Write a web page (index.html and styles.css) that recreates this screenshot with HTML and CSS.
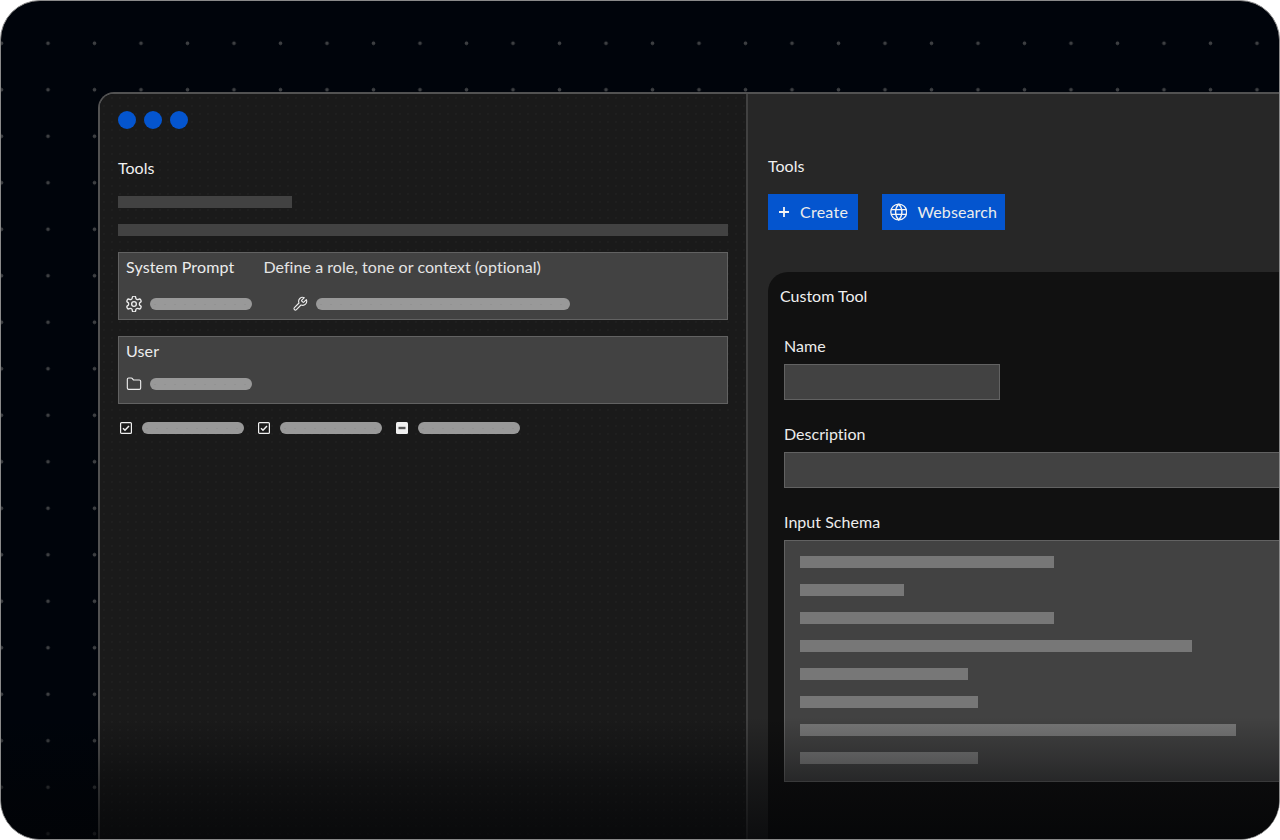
FILE: index.html
```html
<!DOCTYPE html>
<html lang="en">
<head>
<meta charset="utf-8">
<title>Tools</title>
<link rel="stylesheet" href="styles.css">
</head>
<body>
<div class="frame">
  <div class="window">
    <section class="pane-left">
      <div class="lights"><span class="light"></span><span class="light"></span><span class="light"></span></div>
      <h2 class="title-left">Tools</h2>
      <div class="bar bar-short"></div>
      <div class="bar bar-full"></div>
      <div class="box box-system">
        <div class="box-head"><span class="box-name">System Prompt</span><span class="box-hint">Define a role, tone or context (optional)</span></div>
        <div class="box-row">
          <span class="item">
            <svg class="icon" viewBox="2.4 1.8 19.2 20.4"><path d="M12.22 2h-.44a2 2 0 0 0-2 2v.18a2 2 0 0 1-1 1.73l-.43.25a2 2 0 0 1-2 0l-.15-.08a2 2 0 0 0-2.73.73l-.22.38a2 2 0 0 0 .73 2.73l.15.1a2 2 0 0 1 1 1.72v.51a2 2 0 0 1-1 1.74l-.15.09a2 2 0 0 0-.73 2.73l.22.38a2 2 0 0 0 2.73.73l.15-.08a2 2 0 0 1 2 0l.43.25a2 2 0 0 1 1 1.73V20a2 2 0 0 0 2 2h.44a2 2 0 0 0 2-2v-.18a2 2 0 0 1 1-1.73l.43-.25a2 2 0 0 1 2 0l.15.08a2 2 0 0 0 2.73-.73l.22-.39a2 2 0 0 0-.73-2.73l-.15-.08a2 2 0 0 1-1-1.74v-.5a2 2 0 0 1 1-1.74l.15-.09a2 2 0 0 0 .73-2.73l-.22-.38a2 2 0 0 0-2.73-.73l-.15.08a2 2 0 0 1-2 0l-.43-.25a2 2 0 0 1-1-1.73V4a2 2 0 0 0-2-2z"/><circle cx="12" cy="12" r="3"/></svg>
            <span class="pill"></span>
          </span>
          <span class="item item-tool">
            <svg class="icon" viewBox="0 0 24 24"><path d="M14.7 6.3a1 1 0 0 0 0 1.4l1.6 1.6a1 1 0 0 0 1.4 0l3.77-3.77a6 6 0 0 1-7.94 7.94l-6.91 6.91a2.12 2.12 0 0 1-3-3l6.91-6.91a6 6 0 0 1 7.94-7.94l-3.76 3.76z"/></svg>
            <span class="pill pill-long"></span>
          </span>
        </div>
      </div>
      <div class="box box-user">
        <div class="box-head"><span class="box-name">User</span></div>
        <div class="box-row box-row-user">
          <span class="item">
            <svg class="icon" viewBox="0 0 24 24"><path d="M20 20a2 2 0 0 0 2-2V8a2 2 0 0 0-2-2h-7.9a2 2 0 0 1-1.69-.9L9.6 3.9A2 2 0 0 0 7.93 3H4a2 2 0 0 0-2 2v13a2 2 0 0 0 2 2Z"/></svg>
            <span class="pill"></span>
          </span>
        </div>
      </div>
      <div class="checks">
        <span class="check"><svg class="check-icon" viewBox="0 0 12 12"><rect x=".6" y=".6" width="10.8" height="10.8" rx="1"/><path class="tick" d="M3 6.2l2 2L9 4"/></svg><span class="pill"></span></span>
        <span class="check"><svg class="check-icon" viewBox="0 0 12 12"><rect x=".6" y=".6" width="10.8" height="10.8" rx="1"/><path class="tick" d="M3 6.2l2 2L9 4"/></svg><span class="pill"></span></span>
        <span class="check"><svg class="check-icon" viewBox="0 0 12 12"><rect class="solid" x="0" y="0" width="12" height="12" rx="1.5"/><path class="dash" d="M2.5 6h7"/></svg><span class="pill"></span></span>
      </div>
    </section>
    <section class="pane-right">
      <h2 class="title-right">Tools</h2>
      <div class="actions">
        <button class="btn btn-create"><svg class="btn-plus" viewBox="0 0 12 12"><path d="M6 1v10M1 6h10"/></svg>Create</button>
        <button class="btn btn-search"><svg class="btn-globe" viewBox="1 1 22 22"><circle cx="12" cy="12" r="10"/><path d="M12 2a14.5 14.5 0 0 0 0 20 14.5 14.5 0 0 0 0-20"/><path d="M2.6 9h18.8M2.6 15h18.8"/></svg>Websearch</button>
      </div>
      <div class="card">
        <h3 class="card-title">Custom Tool</h3>
        <label class="label">Name</label>
        <div class="field field-name"></div>
        <label class="label">Description</label>
        <div class="field"></div>
        <label class="label">Input Schema</label>
        <div class="schema">
          <div class="line" style="width:254px"></div>
          <div class="line" style="width:104px"></div>
          <div class="line" style="width:254px"></div>
          <div class="line" style="width:392px"></div>
          <div class="line" style="width:168px"></div>
          <div class="line" style="width:178px"></div>
          <div class="line" style="width:436px"></div>
          <div class="line" style="width:178px"></div>
        </div>
      </div>
    </section>
  </div>
  <div class="fade"></div>
</div>
</body>
</html>
```
FILE: styles.css
```css
* { box-sizing: border-box; }
html, body { margin: 0; background: #fff; }
body { width: 1280px; height: 840px; overflow: hidden; font-family: "Lato", "Liberation Sans", sans-serif; color: #f0f0f0; }
h2, h3 { margin: 0; font-weight: 400; font-size: 16px; line-height: 20px; }

.frame {
  position: relative;
  width: 1280px;
  height: 840px;
  padding: 91px 0 0 97px;
  overflow: hidden;
  border: 1px solid #8a8a8a;
  border-radius: 40px;
  background-color: #00040b;
  background-image: radial-gradient(circle, #3d3f42 0, #3d3f42 1.6px, transparent 2.2px);
  background-size: 46.5px 46.5px;
  background-position: -22.75px 19px;
}
.fade {
  position: absolute;
  left: 0; right: 0; bottom: 0;
  height: 122px;
  background: linear-gradient(to bottom, rgba(2,3,5,0) 0, rgba(2,3,5,.25) 33%, rgba(2,3,5,.42) 52%, rgba(2,3,5,.72) 100%);
  pointer-events: none;
}

.window {
  display: flex;
  width: 1240px;
  height: 760px;
  border: solid #525252;
  border-width: 2px 0 0 2px;
  border-top-left-radius: 16px;
  overflow: hidden;
}
.pane-left {
  flex: 0 0 648px;
  padding: 17px 18px 0;
  background-color: #1a1a1a;
  background-image: radial-gradient(circle, #222 0, #222 .5px, transparent 1px);
  background-size: 8px 8px;
  border-right: 2px solid #414141;
}
.pane-right {
  flex: 1;
  padding: 62px 0 0 20px;
  background: #272727;
}

.lights { display: flex; gap: 8px; }
.light { width: 18px; height: 18px; border-radius: 50%; background: #0455cf; }
.title-left { margin-top: 29px; }
.bar { height: 12px; background: #424242; }
.bar-short { width: 174px; margin-top: 18px; }
.bar-full { width: 610px; margin-top: 16px; }

.box { width: 610px; height: 68px; background: #424242; border: 1px solid #626262; padding: 4px 7px 0; }
.box-system { margin-top: 16px; }
.box-user { margin-top: 16px; }
.box-head { display: flex; gap: 29px; line-height: 20px; font-size: 16px; }
.box-name { color: #ececec; letter-spacing: .15px; }
.box-hint { color: #e4e4e4; letter-spacing: .05px; }
.box-row { display: flex; margin-top: 19px; }
.box-row-user { margin-top: 15px; }
.item { display: flex; align-items: center; gap: 8px; }
.item-tool { margin-left: 40px; }
.icon { width: 16px; height: 16px; fill: none; stroke: #ececec; stroke-width: 1.7; stroke-linecap: round; stroke-linejoin: round; }
.pill {
  display: block;
  width: 102px;
  height: 12px;
  border-radius: 6px;
  background-color: #999;
  background-image: radial-gradient(circle, #909090 0, #909090 .4px, transparent .9px);
  background-size: 10px 7px;
  background-position: 0 3px;
}
.pill-long { width: 254px; }

.checks { display: flex; gap: 14px; margin: 18px 0 0 2px; }
.check { display: flex; align-items: center; gap: 10px; }
.check-icon { width: 12px; height: 12px; fill: none; stroke: #f0f0f0; stroke-width: 1.2; }
.check-icon .tick { stroke-width: 1.5; }
.check-icon .solid { fill: #f0f0f0; stroke: none; }
.check-icon .dash { stroke: #555; stroke-width: 2.4; }

.title-right { margin-top: 0; }
.actions { display: flex; gap: 24px; margin-top: 18px; }
.btn { display: flex; align-items: center; height: 36px; border: 0; padding: 0 8px; background: #0455cf; color: #ececec; font: 400 16px/20px "Lato", "Liberation Sans", sans-serif; letter-spacing: .25px; }
.btn-create { width: 90px; padding-left: 10px; gap: 10px; }
.btn-search { width: 123px; gap: 10px; letter-spacing: .12px; }
.btn-plus { width: 12px; height: 12px; fill: none; stroke: #f4f4f4; stroke-width: 1.8; }
.btn-globe { width: 18px; height: 18px; fill: none; stroke: #f4f4f4; stroke-width: 1.7; }

.card { margin-top: 42px; width: 560px; height: 600px; padding: 14px 0 0 12px; background: #111; border-top-left-radius: 20px; }
.card-title { line-height: 20px; }
.label { display: block; margin: 30px 0 8px 4px; font-size: 16px; line-height: 20px; color: #ececec; letter-spacing: .03px; }
.field { height: 36px; margin-left: 4px; margin-bottom: -6px; background: #424242; border: 1px solid #626262; }
.field-name { width: 216px; }
.schema { height: 242px; margin-left: 4px; padding: 15px 15px 0; background: #424242; border: 1px solid #626262; }
.line { height: 12px; margin-bottom: 16px; background: #777; }
```
